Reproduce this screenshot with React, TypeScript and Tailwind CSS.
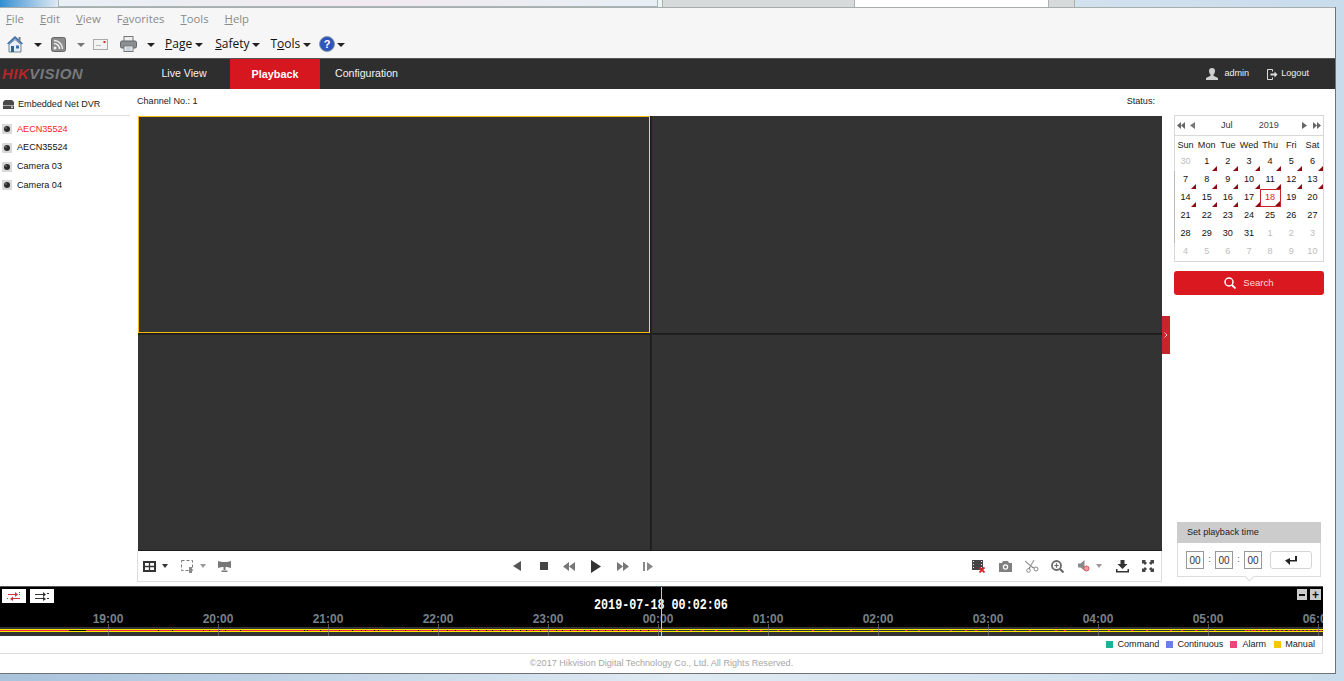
import React from "react";

const Arrow = () => <span className="inline-block ml-[3px] w-0 h-0 border-l-[4px] border-r-[4px] border-t-[4px] border-l-transparent border-r-transparent border-t-[#222] align-middle" />;

const U = ({ k, r }: { k: string; r: string }) => <span><span className="underline">{k}</span>{r}</span>;

const HomeIcon = () => (
  <svg width="18" height="18" viewBox="0 0 18 18"><path d="M9 1 1 8.500l1.500 1L9 3.500l6.500 6 1.500-1z" fill="#3b6ea8" /><path d="M3 9.500 9 4.500l6 5V17H3z" fill="#e8eef5" stroke="#6f8199" /><rect x="5" y="11" width="3" height="6" fill="#2f5f96" /><rect x="10" y="10.500" width="3" height="3" fill="#3b6ea8" /><rect x="12.500" y="2" width="2" height="4" fill="#7a7f85" /></svg>
);
const RssIcon = () => (
  <svg width="15" height="15" viewBox="0 0 15 15"><rect x=".5" y=".5" width="14" height="14" rx="2" fill="#8b8b8b" stroke="#666" /><circle cx="4" cy="11" r="1.500" fill="#eee" /><path d="M3 6.500A5.500 5.500 0 0 1 8.500 12M3 3.500A8.500 8.500 0 0 1 11.500 12" stroke="#eee" strokeWidth="1.500" fill="none" /></svg>
);
const MailIcon = () => (
  <svg width="15" height="11" viewBox="0 0 15 11"><rect x=".5" y=".5" width="14" height="10" fill="#f3f3f3" stroke="#aaa" /><path d="M3 6.500h5" stroke="#bbb" /><rect x="10.500" y="2" width="2" height="2" fill="#c0392b" /></svg>
);
const PrintIcon = () => (
  <svg width="17" height="16" viewBox="0 0 17 16"><rect x="4" y=".5" width="9" height="5" fill="#eee" stroke="#777" /><rect x=".5" y="5" width="16" height="7" rx="1.500" fill="#8a8f94" stroke="#5f6468" /><rect x="4" y="10" width="9" height="5.500" fill="#fff" stroke="#777" /><path d="M5.500 12h6M5.500 14h6" stroke="#9ab" /></svg>
);
const HelpIcon = () => (
  <svg width="16" height="16" viewBox="0 0 16 16"><circle cx="8" cy="8" r="7.500" fill="#2f55b8" stroke="#8d99ad" /><text x="8" y="12" textAnchor="middle" fontSize="11" fontWeight="700" fill="#fff" fontFamily="Liberation Sans">?</text></svg>
);
const P = ({ d, c = "#555", w = 15, h = 15, vb = "0 0 16 16" }: { d: string; c?: string; w?: number; h?: number; vb?: string }) => (
  <svg width={w} height={h} viewBox={vb}><path d={d} fill={c} /></svg>
);

const weekdays = ["Sun", "Mon", "Tue", "Wed", "Thu", "Fri", "Sat"];
type Day = { n: number; muted?: boolean; rec?: boolean; today?: boolean };
const weeks: Day[][] = [
  [{ n: 30, muted: true }, ...[1, 2, 3, 4, 5, 6].map((n) => ({ n, rec: true }))],
  [7, 8, 9, 10, 11, 12, 13].map((n) => ({ n, rec: true })),
  [{ n: 14, rec: true }, { n: 15, rec: true }, { n: 16, rec: true }, { n: 17, rec: true }, { n: 18, rec: true, today: true }, { n: 19 }, { n: 20 }],
  [21, 22, 23, 24, 25, 26, 27].map((n) => ({ n })),
  [{ n: 28 }, { n: 29 }, { n: 30 }, { n: 31 }, { n: 1, muted: true }, { n: 2, muted: true }, { n: 3, muted: true }],
  [4, 5, 6, 7, 8, 9, 10].map((n) => ({ n, muted: true })),
];

const hours = ["19:00", "20:00", "21:00", "22:00", "23:00", "00:00", "01:00", "02:00", "03:00", "04:00", "05:00", "06:00"];
const blackMarks = [69, 70, 71, 72, 73, 74, 75, 76, 77, 78, 79, 80, 81, 82, 83, 84, 85, 158, 172, 203, 209, 219, 225, 240, 304, 307, 320, 339, 352, 361, 365, 374, 378, 392, 405, 418, 432, 447, 455, 470, 478, 486, 492, 500, 505, 512, 520, 526, 533, 540, 548, 556, 562, 570, 577, 584, 590, 598, 605, 612, 618, 626, 633, 640, 648];
const redMarks = [676, 690, 702, 715, 731, 748, 760, 777, 790, 812, 830, 850, 871, 905, 918, 950, 965, 975, 1000, 1014, 1029, 1055, 1064, 1088, 1108, 1131, 1146, 1170, 1181, 1195, 1205, 1214, 1245, 1248, 1251, 1254, 1258, 1262, 1266, 1270, 1275, 1279, 1283, 1288, 1292, 1296, 1300, 1304, 1308, 1312, 1316, 1320];

export default function App() {
  return (
    <div className="w-[1344px] h-[681px] overflow-hidden flex flex-col bg-gradient-to-r from-[#a9c3dc] via-[#dfeaf3] to-[#c9dcec] font-['Liberation_Sans',Arial,sans-serif] text-[9.1px] text-[#111]">
      {/* browser tab strip */}
      <div className="h-[7px] flex items-stretch shrink-0 w-[1336px]">
        <div className="w-[58px] bg-gradient-to-r from-[#2a8fd0] to-[#dfeaf3]" />
        <div className="w-[600px] bg-gradient-to-r from-[#e9f0f6] via-[#f2e9ee] to-[#e7eff5] border-b border-r border-[#a9b7b7] border-l" />
        <div className="w-[4px] bg-[#eef3f6]" />
        <div className="w-[192px] bg-[#d6dada] border-l border-[#aab2b2]" />
        <div className="w-[194px] bg-white border-l border-[#aab2b2]" />
        <div className="w-[27px] bg-[#d6dada] border-l border-r border-[#aab2b2]" />
        <div className="flex-1" />
      </div>

      <div className="w-[1336px] h-[667px] shrink-0 flex flex-col bg-white border-r border-b border-[#6f7376] overflow-hidden">
        {/* IE menu + command bar */}
        <div className="h-[51px] shrink-0 bg-[#f6f6f6] border-t border-[#a7adad] flex flex-col font-['Open_Sans',sans-serif] text-[12px]">
          <div className="h-[22px] pl-[6px] flex items-center gap-[16px] text-[11.3px] text-[#8a8a8a]">
            <U k="F" r="ile" /><U k="E" r="dit" /><U k="V" r="iew" /><span>F<span className="underline">a</span>vorites</span><U k="T" r="ools" /><U k="H" r="elp" />
          </div>
          <div className="h-[26px] pt-[2px] flex items-center pl-[6px] text-[#111]">
            <HomeIcon />
            <span className="ml-[7px]"><Arrow /></span>
            <span className="ml-[9px]"><RssIcon /></span>
            <span className="ml-[11px]"><span className="inline-block w-0 h-0 border-l-[4px] border-r-[4px] border-t-[4px] border-l-transparent border-r-transparent border-t-[#777] align-middle" /></span>
            <span className="ml-[8px] flex"><MailIcon /></span>
            <span className="ml-[12px] flex"><PrintIcon /></span>
            <span className="ml-[7px]"><Arrow /></span>
            <span className="ml-[10px]"><U k="P" r="age" /><Arrow /></span>
            <span className="ml-[12px]"><U k="S" r="afety" /><Arrow /></span>
            <span className="ml-[10px]">T<span className="underline">o</span>ols<Arrow /></span>
            <span className="ml-[8px] flex"><HelpIcon /></span>
            <span className="-ml-[1px]"><Arrow /></span>
          </div>
        </div>

        {/* nav */}
        <div className="h-[31px] shrink-0 bg-[#2e2e2e] border-t border-[#555] flex items-center text-white">
          <div className="w-[139px] pl-[2px] font-bold italic text-[15px] tracking-[0.5px]">
            <span className="text-[#b3262c]">HIK</span><span className="text-[#77797c]">VISION</span>
          </div>
          <div className="w-[91px] pr-[1px] h-full flex items-center justify-center text-[10.6px] text-[#f2f2f2]">Live View</div>
          <div className="w-[90px] h-full flex items-center justify-center bg-[#d7171f] text-[10.8px] font-bold">Playback</div>
          <div className="w-[91px] pl-[2px] h-full flex items-center justify-center text-[10.6px] text-[#f2f2f2]">Configuration</div>
          <div className="flex-1" />
          <svg width="12" height="12" viewBox="0 0 12 12"><path d="M6 0a3 3 0 0 1 3 3c0 1.500-.8 3-1.500 3.600v1.200L12 10v2H0v-2l4.500-2.200V6.600C3.800 6 3 4.500 3 3a3 3 0 0 1 3-3z" fill="#cfcfcf" /></svg>
          <span className="ml-[6px] text-[#eee]">admin</span>
          <svg className="ml-[18px]" width="11" height="11" viewBox="0 0 11 11"><path d="M.5.500h5v2M.5.500v10h5v-2" fill="none" stroke="#ddd" /><path d="M3.500 4.500h4V2.500l3 3-3 3v-2h-4z" fill="#ddd" /></svg>
          <span className="ml-[3px] mr-[26px] text-[#eee]">Logout</span>
        </div>

        {/* body */}
        <div className="h-[497px] shrink-0 flex">
          {/* device tree */}
          <div className="w-[137px] shrink-0">
            <div className="w-[130px] h-[27px] border-b border-[#ddd] pl-[2px] pt-[5px] flex items-center">
              <svg width="13" height="9" viewBox="0 0 13 9"><path d="M1 2 3 0h7l2 2v7H1z" fill="#4a4a4a" /><rect x="1" y="5" width="11" height="1" fill="#aaa" /><circle cx="10" cy="7.200" r="1" fill="#ddd" /></svg>
              <span className="ml-[3px] text-[#222]">Embedded Net DVR</span>
            </div>
            <ul className="pt-[4px] pl-[2px]">
              {["AECN35524", "AECN35524", "Camera 03", "Camera 04"].map((c, i) => (
                <li key={i} className={`h-[18.700px] flex items-center gap-[5px] ${i === 0 ? "text-[#ff1a22]" : "text-[#111]"}`}>
                  <svg width="10" height="10" viewBox="0 0 10 10"><rect width="10" height="10" rx="1" fill="#d8d8d8" /><circle cx="5" cy="5" r="3" fill="#2a2a2a" /><circle cx="4" cy="4" r=".8" fill="#999" /></svg>
                  {c}
                </li>
              ))}
            </ul>
          </div>

          {/* center */}
          <div className="w-[1025px] shrink-0 flex flex-col">
            <div className="h-[27px] flex justify-between items-center pr-[7px] pb-[1px] text-[#222]">
              <span>Channel No.: 1</span>
              <span>Status:</span>
            </div>
            <div className="ml-[1px] h-[435px] grid grid-cols-[512px_1fr] grid-rows-[217px_1fr] gap-[1px] bg-[#1c1c1c] border-b border-[#1c1c1c]">
              <div className="bg-[#333333] border border-[#f2b90f] border-r-[#e9d48f]" />
              <div className="bg-[#333333] border-l border-[#222]" />
              <div className="bg-[#333333] border-t border-[#222]" />
              <div className="bg-[#333333] border-t border-l border-[#222]" />
            </div>
            <div className="h-[31px] border-l border-b border-r border-[#dcdcdc] flex items-center text-[#444] relative">
              <div className="flex items-center pl-[5px] w-[130px]">
                <svg width="13" height="11" viewBox="0 0 13 11"><rect x="1" y="1" width="11" height="9" fill="#fff" stroke="#333" strokeWidth="2" /><path d="M1 5.500h11M6.500 1v9" stroke="#333" strokeWidth="1.300" /></svg>
                <span className="ml-[6px] w-0 h-0 border-l-[3px] border-r-[3px] border-t-[4px] border-l-transparent border-r-transparent border-t-[#333]" />
                <svg className="ml-[13px]" width="13" height="13" viewBox="0 0 13 13"><rect x=".5" y=".5" width="11" height="10" fill="none" stroke="#777" strokeDasharray="3 2" /><rect x="8" y="7" width="3" height="6" fill="#888" /></svg>
                <span className="ml-[6px] w-0 h-0 border-l-[3px] border-r-[3px] border-t-[4px] border-l-transparent border-r-transparent border-t-[#999]" />
                <svg className="ml-[12px]" width="13" height="12" viewBox="0 0 13 12"><path d="M0 1l4 1h5l4-1v7l-4-1H4L0 8z" fill="#777" /><rect x="5.500" y="6" width="2" height="4" fill="#777" /><rect x="3.500" y="10.500" width="6" height="1.500" fill="#777" /></svg>
              </div>
              <div className="ml-[245px] flex items-center">
                <P w={8} h={10} vb="0 0 8 10" c="#555" d="M8 0v10L0 5z" />
                <span className="ml-[19px] w-[8px] h-[8px] bg-[#444]" />
                <span className="ml-[15px] flex"><P w={12} h={9} vb="0 0 12 9" c="#777" d="M6 0v9L0 4.500zM12 0v9L6 4.500z" /></span>
                <span className="ml-[16px] flex"><P w={10} h={13} vb="0 0 10 13" c="#333" d="M0 0l10 6.500L0 13z" /></span>
                <span className="ml-[16px] flex"><P w={12} h={9} vb="0 0 12 9" c="#777" d="M0 0l6 4.500L0 9zM6 0l6 4.500L6 9z" /></span>
                <span className="ml-[14px] flex"><P w={10} h={9} vb="0 0 10 9" c="#888" d="M0 0h2v9H0zM4 0l6 4.500L4 9z" /></span>
              </div>
              <div className="flex-1" />
              <div className="flex items-center pr-[7px]">
                <svg width="13" height="13" viewBox="0 0 13 13"><rect y="0" width="11" height="10" fill="#444" /><path d="M1 1h1v1H1zM1 4h1v1H1zM1 7h1v1H1zM9 1h1v1H9zM9 4h1v1H9zM9 7h1v1H9z" fill="#eee" /><path d="M7.500 7.500l5 5m0-5l-5 5" stroke="#e0222a" strokeWidth="1.800" /></svg>
                <svg className="ml-[14px]" width="13" height="11" viewBox="0 0 13 11"><path d="M0 2h3l1-2h5l1 2h3v9H0z" fill="#808080" /><circle cx="6.500" cy="6" r="2.700" fill="#fff" /><circle cx="6.500" cy="6" r="1.500" fill="#808080" /></svg>
                <svg className="ml-[13px]" width="14" height="13" viewBox="0 0 14 13"><path d="M0 1l7 6M9 0 5 7" stroke="#999" strokeWidth="1.200" fill="none" /><path d="M5 7l-1 2M7 7l2 1" stroke="#777" strokeWidth="1.200" /><circle cx="3.500" cy="10.500" r="1.800" fill="none" stroke="#888" /><circle cx="11" cy="9" r="2" fill="none" stroke="#888" /></svg>
                <svg className="ml-[12px]" width="13" height="13" viewBox="0 0 13 13"><circle cx="5.500" cy="5.500" r="4.500" fill="none" stroke="#6a6a6a" strokeWidth="1.800" /><path d="M3.300 5.500h4.400M5.500 3.300v4.400" stroke="#6a6a6a" strokeWidth="1.200" /><path d="M9 9l3.500 3.500" stroke="#6a6a6a" strokeWidth="2.200" /></svg>
                <svg className="ml-[14px]" width="12" height="12" viewBox="0 0 12 12"><path d="M0 3.500h2.500L6.500 0v10.500L2.500 7.500H0z" fill="#8a8a8a" /><circle cx="8.500" cy="8.500" r="2.500" fill="#f1a0a0" stroke="#e0525a" /></svg>
                <span className="ml-[6px] w-0 h-0 border-l-[3px] border-r-[3px] border-t-[4px] border-l-transparent border-r-transparent border-t-[#999]" />
                <svg className="ml-[14px]" width="13" height="13" viewBox="0 0 13 13"><path d="M4.500 0h4v4h3l-5 5-5-5h3z" fill="#333" /><path d="M0 9v3.500h13V9h-1.500v2h-10V9z" fill="#333" /></svg>
                <svg className="ml-[13px]" width="12" height="12" viewBox="0 0 12 12"><path d="M0 0h4L3 1l2 2-2 2-2-2-1 1zM12 0v4l-1-1-2 2-2-2 2-2-1-1zM0 12V8l1 1 2-2 2 2-2 2 1 1zM12 12H8l1-1-2-2 2-2 2 2 1-1z" fill="#444" /></svg>
              </div>
            </div>
          </div>

          {/* right panel */}
          <div className="relative flex-1 flex flex-col pl-[12px]">
            <div className="absolute left-0 top-[227px] w-[8px] h-[38px] bg-[#c8242b] flex items-center justify-center">
              <svg width="4" height="6" viewBox="0 0 4 6"><path d="M.5.500 3 3 .5 5.500" fill="none" stroke="#f4c7c9" /></svg>
            </div>
            <div className="w-[150px] mt-[26px] border border-[#d8d8d8] h-[147px] flex flex-col">
              <div className="h-[20px] flex items-center px-[2px] border-b border-[#d8d8d8] text-[#666]">
                <span className="flex items-center gap-[5px]">
                  <P w={8} h={7} vb="0 0 8 7" c="#666" d="M4 0v7L0 3.500zM8 0v7L4 3.500z" />
                  <P w={5} h={7} vb="0 0 5 7" c="#777" d="M5 0v7L0 3.500z" />
                </span>
                <span className="text-[#334] ml-[26px]">Jul</span>
                <span className="text-[#444] ml-[26px]">2019</span>
                <span className="flex items-center gap-[6px] ml-auto">
                  <P w={5} h={7} vb="0 0 5 7" c="#666" d="M0 0v7l5-3.500z" />
                  <P w={8} h={7} vb="0 0 8 7" c="#666" d="M0 0v7l4-3.500zM4 0v7l4-3.500z" />
                </span>
              </div>
              <div className="grid grid-cols-7 h-[17px] pt-[2px] items-center text-center">
                {weekdays.map((d) => <span key={d} className="text-[#222]">{d}</span>)}
              </div>
              {weeks.map((w, i) => (
                <div key={i} className={`grid grid-cols-7 h-[18px] text-center ${i > 0 && i < 5 ? "border-l border-[#bbb] -ml-[1px]" : ""}`}>
                  {w.map((d, j) => (
                    <span key={j} className={`relative flex items-center justify-center ${d.muted ? "text-[#bdbdbd]" : d.today ? "text-[#e0222a] border border-[#c8242b]" : "text-[#111]"}`}>
                      {d.n}
                      {d.rec && (
                        <svg className="absolute right-0 bottom-0" width="5" height="5" viewBox="0 0 5 5"><path d="M5 0v5H0z" fill="#8c0a10" /></svg>
                      )}
                    </span>
                  ))}
                </div>
              ))}
            </div>
            <div className="w-[150px] h-[24px] mt-[9px] bg-[#d9191f] rounded-[3px] flex items-center justify-center text-[9.6px] text-[#f6d9da]">
              <svg width="12" height="12" viewBox="0 0 12 12"><circle cx="5" cy="5" r="4" fill="none" stroke="#fff" strokeWidth="1.500" /><path d="M8 8l3.500 3.500" stroke="#fff" strokeWidth="1.800" /></svg>
              <span className="ml-[7px]">Search</span>
            </div>
            <div className="flex-1" />
            <div className="relative ml-[3px] mb-[9px] w-[144px] h-[55px] border border-[#dcdcdc] flex flex-col">
              <div className="h-[21px] -mx-[1px] -mt-[1px] bg-[#cccccc] pl-[10px] flex items-center text-[#222]">Set playback time</div>
              <div className="flex-1 flex items-center pl-[8px] text-[#555] pt-[1px]">
                {["00", ":", "00", ":", "00"].map((v, i) =>
                  v === ":" ? (
                    <span key={i} className="w-[11px] text-center">:</span>
                  ) : (
                    <span key={i} className="w-[18px] h-[18px] border border-[#999] flex items-center justify-center text-[10px] text-[#333]">{v}</span>
                  )
                )}
                <span className="ml-[8px] w-[42px] h-[18px] border border-[#d4d4d4] rounded-[3px] flex items-center justify-center">
                  <svg width="12" height="9" viewBox="0 0 12 9"><path d="M12 0v5.500H5V9L0 4.500 5 2v2h5V0z" fill="#222" /></svg>
                </span>
              </div>
              <span className="absolute left-[68px] -bottom-[4px] w-[7px] h-[7px] rotate-45 bg-white border-r border-b border-[#dcdcdc]" />
            </div>
          </div>
        </div>

        {/* timeline */}
        <div className="w-[1323px] h-[50px] shrink-0 bg-black relative overflow-hidden flex flex-col border-t border-[#555]">
          <div className="h-[30px] flex pt-[2px] pl-[2px] gap-[4px] shrink-0">
            <span className="w-[24px] h-[14px] bg-white flex items-center justify-center">
              <svg width="14" height="9" viewBox="0 0 14 9"><path d="M1 2h7V0l3 2.500L8 5V3H1zM12 0h1v1h-1zM12 2h1v1h-1zM13 6H6V4.500L3 7l3 2V7h7zM0 6h1v1H0z" fill="#d0333b" /></svg>
            </span>
            <span className="w-[24px] h-[14px] bg-white flex items-center justify-center">
              <svg width="14" height="9" viewBox="0 0 14 9"><path d="M0 2h8V0l3 2.500L8 5V3H0zM0 6h8V4.500L11 7 8 9V7H0zM12 1h2v1h-2zM12 6h2v1h-2z" fill="#333" /></svg>
            </span>
          </div>
          <div className="absolute left-[594px] top-[11px] text-white text-[15px] font-bold leading-[16px] z-10 font-['Liberation_Mono',monospace] whitespace-nowrap origin-left scale-x-[0.783]">
            2019-07-18 00:02:06
          </div>
          <div className="absolute right-[2px] top-[2px] flex gap-[3px]">
            <span className="w-[10px] h-[11px] bg-[#cccccc] flex items-center justify-center"><span className="w-[6px] h-[2px] bg-[#111]" /></span>
            <span className="w-[11px] h-[11px] bg-[#cccccc] text-[#111] flex items-center justify-center font-bold text-[12px] leading-none">+</span>
          </div>
          <div className="flex pl-[53px] text-[12px] leading-[14px] text-[#75808c] font-bold shrink-0 -mt-[5px]">
            {hours.map((h) => <span key={h} className="w-[110px] shrink-0 text-center">{h}</span>)}
          </div>
          <div className="h-[9px] mt-[1px] bg-[#333] relative shrink-0">
            <div className="absolute inset-x-0 top-[2px] h-[1px] bg-[#f7e600]" />
            <div className="absolute left-0 w-[661px] top-[3px] h-[1px] bg-[#ee2a45]" />
            <div className="absolute inset-x-0 top-[4px] h-[1px] bg-[#f7e600]" />
            {blackMarks.map((x, i) => <span key={i} className="absolute top-[3px] w-[1px] h-[1px] bg-black" style={{ left: x }} />)}
            {redMarks.map((x, i) => <span key={i} className="absolute top-[3px] w-[2px] h-[1px] bg-[#ee2a45]" style={{ left: x }} />)}
            <div className="absolute inset-x-0 -top-[3px] bottom-0 flex pl-[53px]">
              {hours.map((h) => <span key={h} className="w-[110px] shrink-0 flex justify-center"><span className="w-[1px] h-full bg-[#777]/70" /></span>)}
            </div>
          </div>
          <div className="absolute left-[661px] top-0 bottom-0 w-[1px] bg-[#f7d000] z-20" />
        </div>

        {/* legend */}
        <div className="w-[1323px] h-[18px] shrink-0 border-b border-r border-[#dcdcdc] flex items-center justify-end pr-[7px] text-[#222]">
          <span className="w-[7px] h-[7px] bg-[#1bb394]" /><span className="ml-[4px]">Command</span>
          <span className="ml-[7px] w-[7px] h-[7px] bg-[#6a7de8]" /><span className="ml-[4px]">Continuous</span>
          <span className="ml-[7px] w-[7px] h-[7px] bg-[#f0457a]" /><span className="ml-[5px]">Alarm</span>
          <span className="ml-[8px] w-[7px] h-[7px] bg-[#f6c600]" /><span className="ml-[4px]">Manual</span>
        </div>

        {/* footer */}
        <div className="flex-1 w-[1323px] flex items-center justify-center text-[#a6a6a6]">©2017 Hikvision Digital Technology Co., Ltd. All Rights Reserved.</div>
      </div>
    </div>
  );
}
